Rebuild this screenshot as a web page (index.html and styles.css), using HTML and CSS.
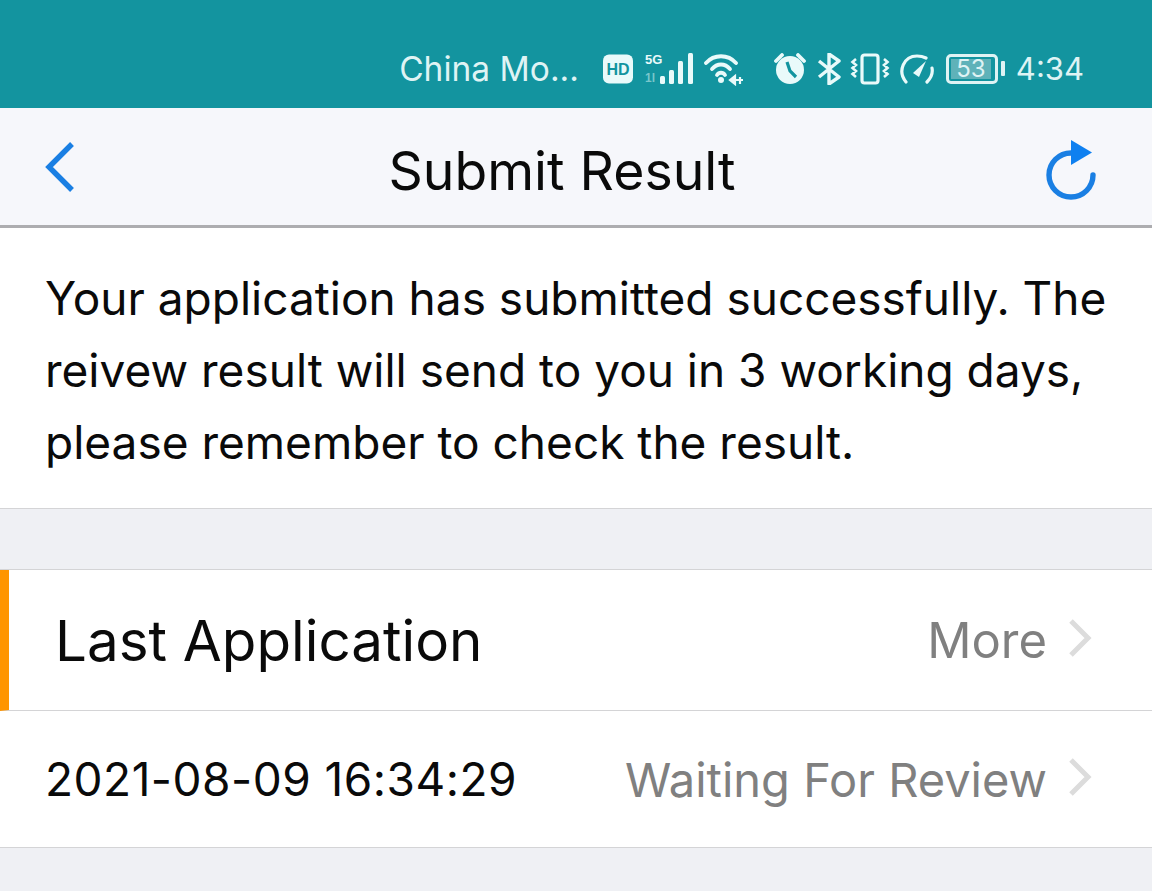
FILE: index.html
```html
<!DOCTYPE html>
<html lang="en">
<head>
<meta charset="utf-8">
<title>Submit Result</title>
<link rel="stylesheet" href="styles.css">
</head>
<body>
<div class="status">
  <span class="carrier">China Mo...</span>
  <svg class="ic-hd" viewBox="0 0 32 30"><rect width="30" height="29" x="1" y="0.5" rx="6" fill="#e9fafa"/><text x="16" y="21" text-anchor="middle" class="hd-text">HD</text></svg>
  <svg class="ic-signal" viewBox="0 0 52 34">
    <text x="1" y="12" class="s5g">5G</text>
    <text x="1" y="30" class="s4g">1l</text>
    <g fill="#e9fafa"><rect x="16" y="24" width="5" height="8" rx="1.5"/><rect x="25" y="18" width="5" height="14" rx="1.5"/><rect x="34" y="9" width="5" height="23" rx="1.5"/><rect x="44" y="1" width="5" height="31" rx="1.5"/></g>
  </svg>
  <svg class="ic-wifi" viewBox="0 0 40 34" fill="none" stroke="#e9fafa" stroke-width="3.800" stroke-linecap="round">
    <path d="M2 11C10 2 24 2 32 11"/><path d="M8 17C13 11 21 11 26 17"/><path d="M13 23C15 20 19 20 21 23"/>
    <circle cx="17" cy="28" r="3" fill="#e9fafa" stroke="none"/>
    <path d="M26 28l5-4v8zM32 28h7M36 25v7" fill="#e9fafa" stroke-width="2.200" stroke-linecap="butt"/>
  </svg>
  <svg class="ic-alarm" viewBox="0 0 34 32">
    <circle cx="17" cy="17" r="14" fill="#e9fafa"/>
    <path d="M3 8l6-6M31 8l-6-6" stroke="#e9fafa" stroke-width="3.800" stroke-linecap="round"/>
    <path d="M14 9l3 9 6 6" fill="none" stroke="#13949f" stroke-width="3.200"/>
  </svg>
  <svg class="ic-bt" viewBox="0 0 24 32" fill="none" stroke="#e9fafa" stroke-width="3.400" stroke-linejoin="round">
    <path d="M2 8l20 16-10 7V1l10 7L2 24"/>
  </svg>
  <svg class="ic-vib" viewBox="0 0 40 32" fill="none" stroke="#e9fafa" stroke-width="3.200">
    <rect x="12" y="2" width="16" height="28" rx="2.500"/>
    <path d="M6 6L2.500 9 6 12l-3.500 3L6 18l-3.500 3L6 24M34 6l3.500 3L34 12l3.500 3L34 18l3.500 3L34 24" stroke-width="2.600"/>
  </svg>
  <svg class="ic-gauge" viewBox="0 0 36 32" fill="none" stroke="#e9fafa" stroke-width="3.200" stroke-linecap="round">
    <path d="M7 29C-2 18 5 3 18 3c4 0 7 1 9 2"/><path d="M28 29c4-4 6-9 5-14"/>
    <path d="M14 20L27 8 20 24z" fill="#e9fafa" stroke="none"/>
  </svg>
  <div class="battery"><div class="battery-body"><span class="battery-level">53</span></div><i class="battery-tip"></i></div>
  <span class="clock">4:34</span>
</div>

<header class="nav">
  <svg class="back" viewBox="0 0 32 52" fill="none" stroke="#1a7fe3" stroke-width="5.400"><path d="M28 3L5 26l23 23"/></svg>
  <h1 class="title">Submit Result</h1>
  <svg class="refresh" viewBox="0 0 54 64" fill="none">
    <path d="M49 37A22 22 0 1 1 27 15" stroke="#1a7fe3" stroke-width="5.400" stroke-linecap="round"/>
    <path d="M27 2L48 14.500 27 27z" fill="#0f80f0"/>
  </svg>
</header>

<section class="notice">Your application has submitted successfully. The reivew result will send to you in 3 working days, please remember to check the result.</section>

<section class="list">
  <div class="row head">
    <span class="head-title">Last Application</span>
    <span class="meta more">More</span>
    <svg class="chev" viewBox="0 0 24 40" fill="none" stroke="#dcdcdc" stroke-width="5"><path d="M3 3l17 17L3 37"/></svg>
  </div>
  <div class="row item">
    <span class="stamp">2021-08-09 16:34:29</span>
    <span class="meta">Waiting For Review</span>
    <svg class="chev" viewBox="0 0 24 40" fill="none" stroke="#dcdcdc" stroke-width="5"><path d="M3 3l17 17L3 37"/></svg>
  </div>
</section>
</body>
</html>
```
FILE: styles.css
```css
* { box-sizing: border-box; }
html, body { margin: 0; height: 100%; }
body { background: #eff0f4; font-family: Inter, Roboto, sans-serif; color: #0a0a0a; overflow: hidden; }
svg { display: block; flex: none; }

.status { height: 108px; background: #13949f; color: #dff3f4; display: flex; align-items: center; justify-content: flex-end; padding: 29px 68px 0 0; }
.carrier { font-size: 33.500px; margin-right: 23px; white-space: nowrap; }
.ic-hd { width: 32px; height: 30px; margin-right: 10px; }
.hd-text { font: 700 16px "Liberation Sans", sans-serif; fill: #13949f; }
.ic-signal { width: 52px; height: 34px; margin-right: 8px; }
.s5g { font: 700 13px "Liberation Sans", sans-serif; fill: #e9fafa; }
.s4g { font: 700 12px "Liberation Sans", sans-serif; fill: #79c6cb; }
.ic-wifi { width: 40px; height: 34px; margin-right: 29px; }
.ic-alarm { width: 34px; height: 32px; margin-right: 10px; }
.ic-bt { width: 24px; height: 32px; margin-right: 9px; }
.ic-vib { width: 40px; height: 32px; margin-right: 9px; }
.ic-gauge { width: 36px; height: 32px; margin-right: 11px; }
.battery { display: flex; align-items: center; gap: 3px; margin-right: 11px; }
.battery-body { width: 52px; height: 30px; border: 3px solid #dff3f4; border-radius: 5px; padding: 2px; }
.battery-level { display: block; width: 40px; height: 100%; background: #5fb2b9; font-size: 24px; line-height: 20px; text-align: center; color: #dff3f4; }
.battery-tip { width: 4px; height: 15px; background: #dff3f4; border-radius: 1px; }
.clock { font-size: 31px; }

.nav { height: 120px; background: #f6f7fb; border-bottom: 3px solid #adadb0; display: flex; align-items: center; padding: 0 54px 0 44px; }
.back { width: 32px; height: 52px; }
.title { flex: 1; margin: 8px 0 0; padding-left: 4px; text-align: center; font-size: 53.500px; font-weight: 400; }
.refresh { width: 54px; height: 64px; margin-top: 7px; }

.notice { background: #fff; height: 281px; padding: 34px 40px 0 45px; font-size: 46px; line-height: 72px; border-bottom: 1px solid #d4d4d6; }

.list { margin-top: 60px; background: #fff; border-top: 1px solid #d4d4d6; }
.row { display: flex; align-items: center; border-bottom: 1px solid #d4d4d6; padding-right: 60px; }
.head { height: 141px; border-left: 9px solid #ff9500; padding-left: 46px; }
.item { height: 137px; padding-left: 45px; }
.head-title { font-size: 56.500px; flex: 1; }
.stamp { font-size: 46px; letter-spacing: 0.500px; flex: 1; }
.meta { color: #808080; font-size: 47px; margin-right: 21px; }
.more { font-size: 49px; }
.chev { width: 24px; height: 42px; margin-bottom: 4px; }
```
